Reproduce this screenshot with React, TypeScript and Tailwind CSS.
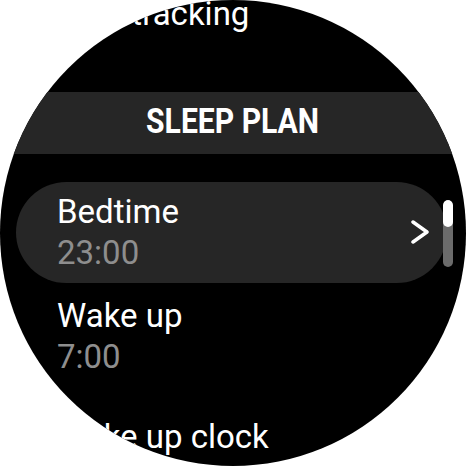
import React from 'react';

const font = { fontFamily: 'Roboto, "Noto Sans", sans-serif' };

function Chevron() {
  return (
    <svg width="20" height="24" viewBox="0 0 20 24" fill="none" className="shrink-0">
      <polyline points="3,2 17,12 3,22" stroke="white" strokeWidth="3.5" strokeLinecap="round" strokeLinejoin="round" />
    </svg>
  );
}

export default function App() {
  return (
    <div className="w-[466px] h-[466px] bg-white" style={font}>
      <div className="relative w-full h-full rounded-full bg-black overflow-hidden text-white">
        <div className="flex flex-col text-[33px] leading-[41px]">
          {/* previous item, scrolled mostly out of view */}
          <div className="-mt-[7px] pl-[42px] whitespace-nowrap">Sleep tracking</div>

          {/* section header */}
          <div className="mt-[58px] h-[62px] bg-[#262626] flex items-center justify-center">
            <span className="inline-block font-bold text-[35px] leading-[35px] scale-x-[0.86] mb-[4px]">SLEEP PLAN</span>
          </div>

          {/* selected row */}
          <div className="mt-[28px] mx-[16px] w-[431px] rounded-full bg-[#262626] pl-[41px] pr-[17px] pt-[9px] pb-[10px] flex items-center justify-between">
            <div className="flex flex-col">
              <span>Bedtime</span>
              <span className="text-[#8e8e8e]">23:00</span>
            </div>
            <Chevron />
          </div>

          <div className="mt-[3px] pl-[57px] pt-[9px] pb-[10px] flex flex-col">
            <span>Wake up</span>
            <span className="text-[#8e8e8e]">7:00</span>
          </div>

          <div className="mt-[29px] pl-[57px] whitespace-nowrap">Wake up clock</div>
        </div>

        {/* scroll indicator */}
        <div className="absolute left-[443px] top-[200px] w-[10px] h-[67px] rounded-full bg-[#6b6b6b] overflow-hidden">
          <div className="h-[27px] w-full rounded-full bg-white" />
        </div>
      </div>
    </div>
  );
}
